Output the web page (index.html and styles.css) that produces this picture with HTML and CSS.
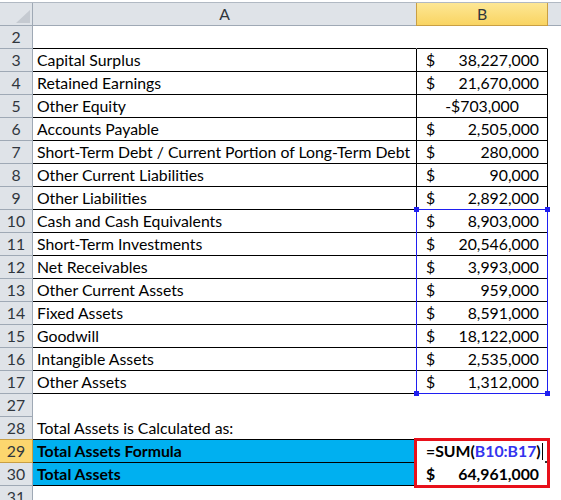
FILE: index.html
```html
<!DOCTYPE html>
<html>
<head>
<meta charset="utf-8">
<link rel="stylesheet" href="styles.css">
</head>
<body>
<div class="sheet">
  <div class="row head">
    <div class="rh corner"><svg width="14" height="13" viewBox="0 0 14 13"><polygon points="14,0 14,13 0,13" fill="#c5cad1"/></svg></div>
    <div class="ch">A</div>
    <div class="ch sel">B</div>
    <div class="ch rest"></div>
  </div>

  <div class="row"><div class="rh">2</div><div class="c a bb"></div><div class="c b bb"></div><div class="c"></div></div>
  <div class="row"><div class="rh">3</div><div class="c a bd">Capital Surplus</div><div class="c b bd"><span>$</span><span>38,227,000</span></div><div class="c"></div></div>
  <div class="row"><div class="rh">4</div><div class="c a bd">Retained Earnings</div><div class="c b bd"><span>$</span><span>21,670,000</span></div><div class="c"></div></div>
  <div class="row"><div class="rh">5</div><div class="c a bd">Other Equity</div><div class="c b bd center"><span>-$703,000</span></div><div class="c"></div></div>
  <div class="row"><div class="rh">6</div><div class="c a bd">Accounts Payable</div><div class="c b bd"><span>$</span><span>2,505,000</span></div><div class="c"></div></div>
  <div class="row"><div class="rh">7</div><div class="c a bd">Short-Term Debt / Current Portion of Long-Term Debt</div><div class="c b bd"><span>$</span><span>280,000</span></div><div class="c"></div></div>
  <div class="row"><div class="rh">8</div><div class="c a bd">Other Current Liabilities</div><div class="c b bd"><span>$</span><span>90,000</span></div><div class="c"></div></div>
  <div class="row"><div class="rh">9</div><div class="c a bd">Other Liabilities</div><div class="c b bd"><span>$</span><span>2,892,000</span></div><div class="c"></div></div>
  <div class="row"><div class="rh">10</div><div class="c a bd">Cash and Cash Equivalents</div><div class="c b bd"><span>$</span><span>8,903,000</span></div><div class="c"></div></div>
  <div class="row"><div class="rh">11</div><div class="c a bd">Short-Term Investments</div><div class="c b bd"><span>$</span><span>20,546,000</span></div><div class="c"></div></div>
  <div class="row"><div class="rh">12</div><div class="c a bd">Net Receivables</div><div class="c b bd"><span>$</span><span>3,993,000</span></div><div class="c"></div></div>
  <div class="row"><div class="rh">13</div><div class="c a bd">Other Current Assets</div><div class="c b bd"><span>$</span><span>959,000</span></div><div class="c"></div></div>
  <div class="row"><div class="rh">14</div><div class="c a bd">Fixed Assets</div><div class="c b bd"><span>$</span><span>8,591,000</span></div><div class="c"></div></div>
  <div class="row"><div class="rh">15</div><div class="c a bd">Goodwill</div><div class="c b bd"><span>$</span><span>18,122,000</span></div><div class="c"></div></div>
  <div class="row"><div class="rh">16</div><div class="c a bd">Intangible Assets</div><div class="c b bd"><span>$</span><span>2,535,000</span></div><div class="c"></div></div>
  <div class="row"><div class="rh">17</div><div class="c a bd">Other Assets</div><div class="c b bd"><span>$</span><span>1,312,000</span></div><div class="c"></div></div>
  <div class="row"><div class="rh">27</div><div class="c a"></div><div class="c b"></div><div class="c"></div></div>
  <div class="row"><div class="rh">28</div><div class="c a bb">Total Assets is Calculated as:</div><div class="c b"></div><div class="c"></div></div>
  <div class="row"><div class="rh rsel">29</div><div class="c a bd blue bold">Total Assets Formula</div><div class="c b formula bold"><span class="f"><span class="k">=SUM(</span><span class="ref">B10:B17</span><span class="k">)</span><span class="caret"></span></span></div><div class="c"></div></div>
  <div class="row"><div class="rh">30</div><div class="c a bd blue bold">Total Assets</div><div class="c b bold"><span>$</span><span>64,961,000</span></div><div class="c"></div></div>
  <div class="row"><div class="rh">31</div><div class="c a"></div><div class="c b"></div><div class="c"></div></div>

  <div class="range">
    <i class="h tl"></i><i class="h tr"></i><i class="h bl"></i><i class="h br"></i>
  </div>
  <div class="redbox"></div>
  <div class="fill-dot"></div>
</div>
</body>
</html>
```

FILE: styles.css
```css
* { box-sizing: border-box; }
html, body { margin: 0; padding: 0; background: #fff; }
body {
  padding-top: 2px;
  font-family: "Lato", "Liberation Sans", sans-serif;
  font-size: 15.8px;
  color: #000;
  overflow: hidden;
}
.sheet { position: relative; width: 561px; }
.row {
  display: grid;
  grid-template-columns: 33px 384px 131px 1fr;
  height: 23px;
}
.row.head {
  height: 24px;
  background: #dfe3e8;
  border-top: 1px solid #b1b9c3;
  border-bottom: 1px solid #9fa9b5;
}
.rh {
  background: #dfe3e8;
  border-right: 1px solid #9fa9b5;
  border-bottom: 1px solid #9fa9b5;
  color: #30363d;
  text-align: center;
  line-height: 22px;
  font-size: 15.8px;
}
.head .rh { border-bottom: none; }
.corner { position: relative; }
.corner svg { position: absolute; left: 16px; top: 7px; }
.ch {
  border-right: 1px solid #b1b9c3;
  text-align: center;
  color: #30363d;
  line-height: 22px;
}
.ch.sel {
  background: linear-gradient(#fde795, #f9d462);
  border-left: 1px solid #c99f43;
  border-right: 1px solid #c99f43;
  border-bottom: 1px solid #c99f43;
  margin-left: -1px;
  margin-bottom: -1px;
}
.ch.rest { border-right: none; }
.rh.rsel {
  background: #fcd66e;
  border-top: 1px solid #c99f43;
  border-bottom: 1px solid #c99f43;
  border-right: 1px solid #c99f43;
  margin-top: -1px;
  line-height: 22px;
}
.c {
  border-bottom: 1px solid transparent;
  border-right: 1px solid transparent;
  line-height: 22px;
  white-space: nowrap;
  overflow: visible;
}
.a { padding-left: 4px; }
.b {
  display: flex;
  justify-content: space-between;
  padding: 0 8px 0 9px;
}
.b.center { justify-content: center; padding: 0; }
.bb { border-bottom-color: #000; }
.bd { border-bottom-color: #000; border-right-color: #000; }
.blue { background: #00b0f0; }
.bold { font-weight: 700; }
.formula { justify-content: flex-start; }
.f { position: relative; }
.k { color: #000; }
.ref { color: #3333ee; }
.caret {
  display: inline-block;
  width: 1px;
  height: 17px;
  background: #000;
  margin-left: 1px;
  vertical-align: -3px;
}
.range {
  position: absolute;
  left: 416px;
  top: 207px;
  width: 132px;
  height: 185px;
  border: 1px solid #1f1ff0;
}
.h {
  position: absolute;
  width: 5px;
  height: 5px;
  background: #1f1ff0;
}
.tl { left: -3px; top: -3px; }
.tr { right: -3px; top: -3px; }
.bl { left: -3px; bottom: -3px; }
.br { right: -3px; bottom: -3px; }
.redbox {
  position: absolute;
  left: 414px;
  top: 436px;
  width: 136px;
  height: 50px;
  border: 3px solid #e8101a;
}
.fill-dot {
  position: absolute;
  left: 545px;
  top: 459px;
  width: 2px;
  height: 2px;
  background: #333;
}
```
